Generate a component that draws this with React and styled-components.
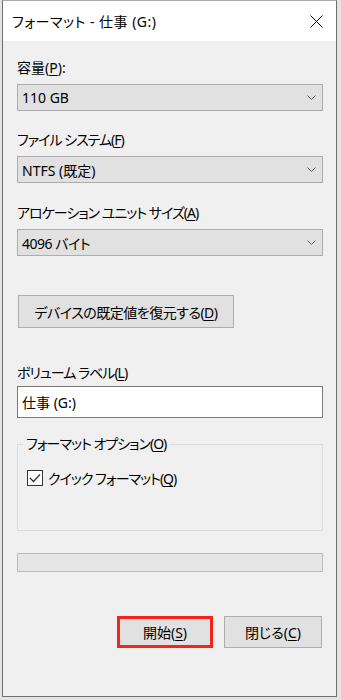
import styled, { createGlobalStyle } from 'styled-components';

const GlobalStyle = createGlobalStyle`
  html, body {
    margin: 0;
    padding: 0;
    background: #e4e4e4;
  }
  body {
    font-family: "Noto Sans", "Noto Sans CJK JP", sans-serif;
    font-feature-settings: "palt";
    color: #000;
  }
`;

const Window = styled.div`
  box-sizing: border-box;
  width: 335px;
  height: 697px;
  margin-left: 2px;
  border: 1px solid #6f6f6f;
  border-top-color: #a8a8a8;
  background: #f0f0f0;
  display: flex;
  flex-direction: column;
`;

const TitleBar = styled.div`
  height: 40px;
  background: #fff;
  display: flex;
  align-items: center;
  justify-content: space-between;
  padding: 0 13px 0 9px;
  font-size: 14px;
  letter-spacing: 0.5px;
`;

const Body = styled.div`
  display: flex;
  flex-direction: column;
  padding: 17px 13px 0 14px;
`;

const Text = styled.span`
  letter-spacing: ${({ $tight }) => $tight || 0}px;
`;

const Label = styled.div`
  font-size: 14px;
  line-height: 20px;
  height: 20px;
  margin-top: ${({ $top }) => $top || 0}px;
  margin-bottom: ${({ $bottom }) => ($bottom === undefined ? 6 : $bottom)}px;
  letter-spacing: ${({ $tight }) => $tight || 0}px;
  white-space: nowrap;
`;

const Key = styled.span`
  text-decoration: underline;
  text-underline-offset: 2px;
  text-decoration-thickness: 1px;
`;

const Combo = styled.div`
  box-sizing: border-box;
  height: 27px;
  width: 306px;
  border: 1px solid #adadad;
  background: #e1e1e1;
  display: flex;
  align-items: center;
  justify-content: space-between;
  padding: 0 6px 0 4px;
  font-size: 14px;
`;

const Button = styled.div`
  box-sizing: border-box;
  height: ${({ $h }) => $h || 32}px;
  width: ${({ $w }) => $w}px;
  border: ${({ $marked }) => ($marked ? '3px solid #f4231c' : '1px solid #adadad')};
  background: #e1e1e1;
  display: flex;
  align-items: center;
  justify-content: center;
  font-size: 14px;
  white-space: nowrap;
  margin-top: ${({ $top }) => $top || 0}px;
  margin-left: ${({ $left }) => $left || 0}px;
`;

const TextInput = styled.div`
  box-sizing: border-box;
  height: 32px;
  width: 306px;
  border: 1px solid #7a7a7a;
  background: #fff;
  display: flex;
  align-items: center;
  padding-left: 4px;
  font-size: 14px;
`;

const Group = styled.fieldset`
  box-sizing: border-box;
  width: 306px;
  margin: 17px 0 0 0;
  padding: 17px 9px 44px 9px;
  border: 1px solid #dcdcdc;
  min-inline-size: 0;
`;

const Legend = styled.legend`
  font-size: 14px;
  line-height: 18px;
  padding: 0 3px;
  margin-left: -4px;
  letter-spacing: -1px;
  white-space: nowrap;
`;

const CheckRow = styled.label`
  display: flex;
  align-items: center;
  gap: 5px;
  height: 16px;
  font-size: 14px;
  white-space: nowrap;
`;

const Box = styled.span`
  box-sizing: border-box;
  width: 16px;
  height: 16px;
  border: 1px solid #333;
  background: #fff;
  display: flex;
  align-items: center;
  justify-content: center;
`;

const Progress = styled.div`
  box-sizing: border-box;
  height: 19px;
  width: 306px;
  margin-top: 22px;
  border: 1px solid #bcbcbc;
  background: #e6e6e6;
`;

const ButtonRow = styled.div`
  display: flex;
  justify-content: flex-end;
  gap: 11px;
  margin-top: 44px;
  padding-right: 1px;
`;

const Chevron = () => (
  <svg width="9" height="5" viewBox="0 0 9 5">
    <polyline points="0.5,0.5 4.5,4.5 8.5,0.5" fill="none" stroke="#606060" strokeWidth="1" />
  </svg>
);

const CloseIcon = () => (
  <svg width="13" height="13" viewBox="0 0 13 13">
    <path d="M0.5 0.5 L12.5 12.5 M12.5 0.5 L0.5 12.5" stroke="#000" strokeWidth="1" fill="none" />
  </svg>
);

const Check = () => (
  <svg width="12" height="10" viewBox="0 0 12 10">
    <polyline points="1,5 4.5,8.5 11,1.5" fill="none" stroke="#333" strokeWidth="1.3" />
  </svg>
);

const App = () => (
  <>
    <GlobalStyle />
    <Window>
      <TitleBar>
        <span>フォーマット - 仕事 (G:)</span>
        <CloseIcon />
      </TitleBar>
      <Body>
        <Label>
          容量(<Key>P</Key>):
        </Label>
        <Combo>
          <span>110 GB</span>
          <Chevron />
        </Combo>

        <Label $top={19} $tight={-1}>
          ファイル システム(<Key>F</Key>)
        </Label>
        <Combo>
          <span>NTFS (既定)</span>
          <Chevron />
        </Combo>

        <Label $top={20} $tight={-1}>
          アロケーション ユニット サイズ(<Key>A</Key>)
        </Label>
        <Combo>
          <Text $tight={-0.5}>4096 バイト</Text>
          <Chevron />
        </Combo>

        <Button $w={216} $h={33} $top={39} $left={1}>
          <Text $tight={-0.5}>
            デバイスの既定値を復元する(<Key>D</Key>)
          </Text>
        </Button>

        <Label $top={35} $bottom={3} $tight={-1}>
          ボリューム ラベル(<Key>L</Key>)
        </Label>
        <TextInput>仕事 (G:)</TextInput>

        <Group>
          <Legend>
            フォーマット オプション(<Key>O</Key>)
          </Legend>
          <CheckRow>
            <Box>
              <Check />
            </Box>
            <Text $tight={-1}>
              クイック フォーマット(<Key>Q</Key>)
            </Text>
          </CheckRow>
        </Group>

        <Progress />

        <ButtonRow>
          <Button $w={96} $marked>
            開始(<Key>S</Key>)
          </Button>
          <Button $w={98}>
            閉じる(<Key>C</Key>)
          </Button>
        </ButtonRow>
      </Body>
    </Window>
  </>
);

export default App;
